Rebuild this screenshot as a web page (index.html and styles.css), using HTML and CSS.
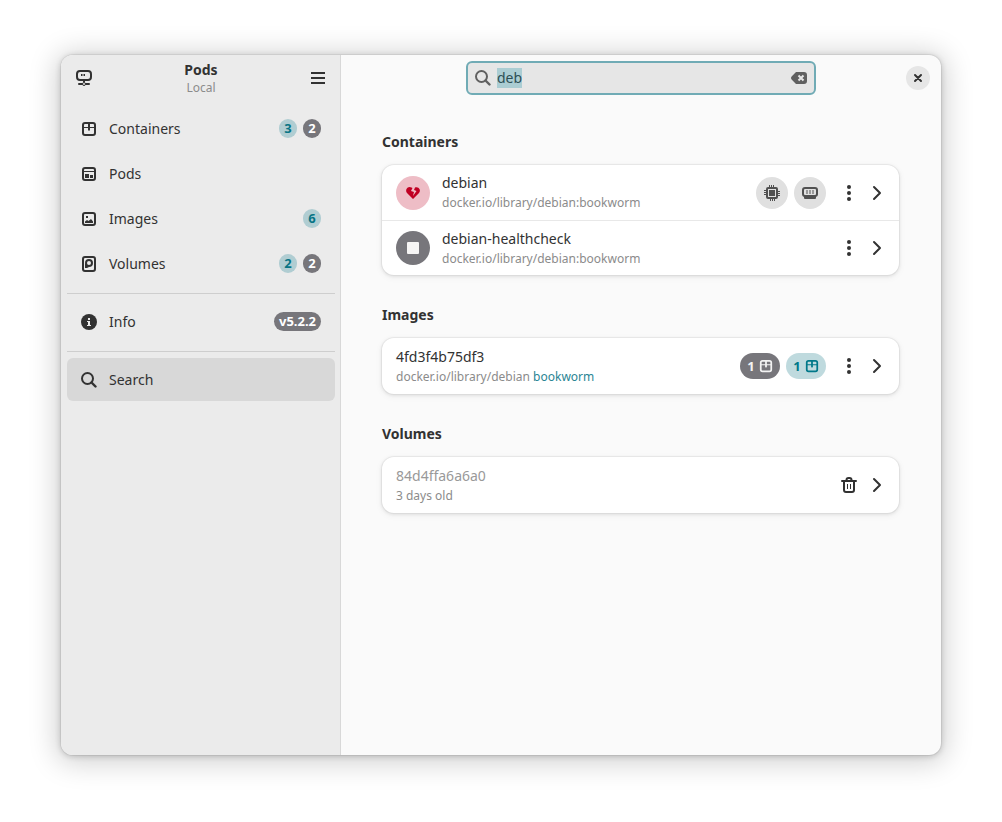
FILE: index.html
```html
<!DOCTYPE html>
<html lang="en">
<head>
<meta charset="utf-8">
<title>Pods</title>
<link rel="stylesheet" href="styles.css">
</head>
<body>
<svg class="defs" aria-hidden="true">
  <symbol id="container" viewBox="0 0 16 16"><rect x="2" y="2" width="12" height="12" rx="2" fill="none" stroke="currentColor" stroke-width="2"/><path d="M2 6h12v1H2zM7 2h2v7l-1 1-1-1z" fill="currentColor"/></symbol>
  <symbol id="dots" viewBox="0 0 16 16"><g fill="currentColor"><circle cx="8" cy="2" r="2"/><circle cx="8" cy="8" r="2"/><circle cx="8" cy="14" r="2"/></g></symbol>
  <symbol id="chevron" viewBox="0 0 16 16"><path d="M5 2l6 6-6 6" fill="none" stroke="currentColor" stroke-width="2" stroke-linecap="round" stroke-linejoin="round"/></symbol>
  <symbol id="search" viewBox="0 0 16 16"><circle cx="6.500" cy="6.500" r="5.500" fill="none" stroke="currentColor" stroke-width="2"/><path d="M10.500 10.500l4 4" stroke="currentColor" stroke-width="2.400" stroke-linecap="round"/></symbol>
</svg>

<div class="window">
  <aside class="sidebar">
    <header class="sidebar-header">
      <button class="flat" aria-label="Connections"><svg class="icon" viewBox="0 0 16 16"><rect x="1" y="1" width="14" height="9" rx="3" fill="none" stroke="currentColor" stroke-width="2"/><path d="M5 4h1.500v2H5zM7.500 4H9v2H7.500zM7 10h2v2H7zM3 13h10a1 1 0 0 1 0 2H3a1 1 0 0 1 0-2z" fill="currentColor"/><circle cx="8" cy="14" r="1.500" fill="#ebebeb" stroke="currentColor"/></svg></button>
      <div class="title"><h1>Pods</h1><p>Local</p></div>
      <button class="flat" aria-label="Main menu"><svg class="icon" viewBox="0 0 16 16"><path d="M1 2h14v2H1zM1 7h14v2H1zM1 12h14v2H1z" fill="currentColor"/></svg></button>
    </header>
    <nav class="nav">
      <a class="item" href="#containers"><svg class="icon"><use href="#container"/></svg><span class="label">Containers</span><span class="count teal">3</span><span class="count">2</span></a>
      <a class="item" href="#pods"><svg class="icon" viewBox="0 0 16 16"><rect x="2" y="2" width="12" height="12" rx="2" fill="none" stroke="currentColor" stroke-width="2"/><path d="M2 5h12v1H2zM4 8h4v4H4zM9 9h3v3H9z" fill="currentColor"/></svg><span class="label">Pods</span></a>
      <a class="item" href="#images"><svg class="icon" viewBox="0 0 16 16"><rect x="2" y="2" width="12" height="12" rx="2" fill="none" stroke="currentColor" stroke-width="2"/><path d="M5 5h2v2H5zM4 12v-1.500L6 9l1.500 1L10 8l2 2.500V12z" fill="currentColor"/></svg><span class="label">Images</span><span class="count teal">6</span></a>
      <a class="item" href="#volumes"><svg class="icon" viewBox="0 0 16 16"><rect x="2" y="1" width="12" height="14" rx="2" fill="none" stroke="currentColor" stroke-width="2"/><circle cx="8" cy="7" r="3" fill="none" stroke="currentColor" stroke-width="2"/><path d="M4 7l2 2.500L8 11l-2 1H4z" fill="currentColor"/></svg><span class="label">Volumes</span><span class="count teal">2</span><span class="count">2</span></a>
      <hr>
      <a class="item" href="#info"><svg class="icon" viewBox="0 0 16 16"><circle cx="8" cy="8" r="8" fill="currentColor"/><path d="M7 4h2v2H7zM6 7h3v4h1v1H6v-1h1V8H6z" fill="#ebebeb"/></svg><span class="label">Info</span><span class="count">v5.2.2</span></a>
      <hr>
      <a class="item selected" href="#search-page" aria-current="page"><svg class="icon"><use href="#search"/></svg><span class="label">Search</span></a>
    </nav>
  </aside>

  <main class="content">
    <header class="content-header">
      <label class="entry">
        <svg class="icon"><use href="#search"/></svg>
        <input type="text" id="query" value="deb" aria-label="Search" autofocus>
        <button class="flat" aria-label="Clear"><svg class="icon" viewBox="0 0 16 16"><path d="M5 2h8a3 3 0 0 1 3 3v6a3 3 0 0 1-3 3H5L.600 9.400a2 2 0 0 1 0-2.800z" fill="currentColor"/><path d="M7.500 5.500l5 5M12.500 5.500l-5 5" stroke="#e6e6e6" stroke-width="2"/></svg></button>
      </label>
      <button class="close" aria-label="Close"><svg class="icon" viewBox="0 0 16 16"><path d="M5 5l6 6M11 5l-6 6" stroke="currentColor" stroke-width="2" stroke-linecap="round"/></svg></button>
    </header>

    <div class="results">
      <section>
        <h2>Containers</h2>
        <div class="card">
          <div class="row">
            <span class="status bad"><svg class="icon" viewBox="0 0 16 16"><path d="M8 14L2 8C-.500 4.500 3 .500 6.500 2.500L7.500 3 6 6l3 1-1 4 3.500-5-2.500-1 1-2.500C13.500 1 16.500 5 14 8z" fill="currentColor"/></svg></span>
            <div class="text"><h3>debian</h3><p>docker.io/library/debian:bookworm</p></div>
            <div class="meters">
              <span class="meter"><svg class="icon" viewBox="0 0 16 16"><rect x="3" y="3" width="10" height="10" rx="1" fill="none" stroke="currentColor" stroke-width="2"/><path d="M5 5h6v6H5zM5 0h1v2H5zM7 0h1v2H7zM9 0h1v2H9zM6 14h1v2H6zM8 14h1v2H8zM10 14h1v2h-1zM0 5h2v1H0zM0 7h2v1H0zM0 9h2v1H0zM14 6h2v1h-2zM14 8h2v1h-2zM14 10h2v1h-2z" fill="currentColor"/><rect x="4.500" y="4.500" width="7" height="7" fill="none" stroke="#e0e0e0"/></svg></span>
              <span class="meter"><svg class="icon" viewBox="0 0 16 16"><rect x="1" y="3" width="14" height="8" rx="2" fill="none" stroke="currentColor" stroke-width="2"/><path d="M2 11h12v2a1 1 0 0 1-1 1H3a1 1 0 0 1-1-1z" fill="currentColor"/><path d="M4 5h2v4H4zM7 5h2v4H7zM10 5h2v4h-2z" fill="#999"/></svg></span>
            </div>
            <div class="actions"><button class="flat" aria-label="Menu"><svg class="icon"><use href="#dots"/></svg></button><a href="#debian" aria-label="Open debian"><svg class="icon"><use href="#chevron"/></svg></a></div>
          </div>
          <div class="row">
            <span class="status"><svg class="icon" viewBox="0 0 16 16"><rect x="2" y="2" width="12" height="12" rx="1" fill="currentColor"/></svg></span>
            <div class="text"><h3>debian-healthcheck</h3><p>docker.io/library/debian:bookworm</p></div>
            <div class="actions"><button class="flat" aria-label="Menu"><svg class="icon"><use href="#dots"/></svg></button><a href="#debian-healthcheck" aria-label="Open debian-healthcheck"><svg class="icon"><use href="#chevron"/></svg></a></div>
          </div>
        </div>
      </section>

      <section>
        <h2>Images</h2>
        <div class="card">
          <div class="row">
            <div class="text"><h3>4fd3f4b75df3</h3><p>docker.io/library/debian <span class="tag">bookworm</span></p></div>
            <div class="meters">
              <span class="pill">1<svg><use href="#container"/></svg></span>
              <span class="pill teal">1<svg><use href="#container"/></svg></span>
            </div>
            <div class="actions"><button class="flat" aria-label="Menu"><svg class="icon"><use href="#dots"/></svg></button><a href="#4fd3f4b75df3" aria-label="Open image"><svg class="icon"><use href="#chevron"/></svg></a></div>
          </div>
        </div>
      </section>

      <section>
        <h2>Volumes</h2>
        <div class="card">
          <div class="row">
            <div class="text"><h3 class="dim">84d4ffa6a6a0</h3><p>3 days old</p></div>
            <div class="actions"><button class="flat" aria-label="Delete"><svg class="icon" viewBox="0 0 16 16"><path d="M1 4h14M3 4v9a2 2 0 0 0 2 2h6a2 2 0 0 0 2-2V4M5.500 3.500V3a2 2 0 0 1 2-2h1a2 2 0 0 1 2 2v.500" fill="none" stroke="currentColor" stroke-width="2" stroke-linecap="round"/><path d="M6 7h1v5H6zM9 7h1v5H9z" fill="currentColor"/></svg></button><a href="#84d4ffa6a6a0" aria-label="Open volume"><svg class="icon"><use href="#chevron"/></svg></a></div>
          </div>
        </div>
      </section>
    </div>
  </main>
</div>
<script src="app.js"></script>
</body>
</html>
```
FILE: styles.css
```css
* { box-sizing: border-box; }

body {
  margin: 0;
  min-height: 100vh;
  padding: 55px 61px 67px;
  display: flex;
  background: #fff;
  color: #323232;
  font: 14px/20px "Noto Sans", sans-serif;
}

h1, h2, h3, p { margin: 0; font-size: 14px; line-height: 20px; }
h3, p { font-weight: 400; }
a { color: inherit; text-decoration: none; }
button { font: inherit; color: inherit; border: 0; padding: 0; cursor: pointer; }

.defs { position: absolute; width: 0; height: 0; }
.icon { display: block; width: 16px; height: 16px; flex: none; overflow: visible; }
.flat { background: none; }

.window {
  flex: 1;
  display: flex;
  border-radius: 12px;
  overflow: hidden;
  background: #fafafa;
  box-shadow: 0 0 0 1px rgba(0, 0, 0, 0.05), 0 1px 6px rgba(0, 0, 0, 0.2), 0 3px 28px 5px rgba(0, 0, 0, 0.18);
}

.sidebar {
  flex: none;
  width: 280px;
  background: #ebebeb;
  border-right: 1px solid #d8d8d8;
}

.sidebar-header {
  display: flex;
  align-items: center;
  justify-content: space-between;
  height: 46px;
  padding: 0 14px 0 15px;
}

.title { text-align: center; }
.title h1 { line-height: 19px; }
.title p { font-size: 12px; line-height: 17px; color: #8b8b8b; }

.nav { display: flex; flex-direction: column; gap: 2px; padding: 6px 5px 6px 6px; }

.nav hr {
  width: 100%;
  height: 1px;
  margin: 6px 0 4px;
  border: 0;
  background: #cecece;
}

.item {
  display: flex;
  align-items: center;
  gap: 6px;
  height: 43px;
  padding: 0 14px;
  border-radius: 6px;
}

.selected { background: #d8d8d8; }
.label { flex: 1; margin-left: 6px; }

.count {
  min-width: 18px;
  padding: 0 5px;
  border-radius: 10px;
  background: #77767b;
  color: #fff;
  font-size: 13px;
  font-weight: 700;
  line-height: 19px;
  text-align: center;
}

.count.teal { background: #b0cdd2; color: #087485; }

.content { flex: 1; min-width: 0; }

.content-header {
  display: grid;
  grid-template-columns: 1fr minmax(0, 350px) 1fr;
  align-items: center;
  height: 46px;
  padding: 0 11px;
}

.entry {
  grid-column: 2;
  display: flex;
  align-items: center;
  gap: 6px;
  height: 34px;
  padding: 0 7px;
  border: 2px solid #70abb5;
  border-radius: 6px;
  background: #e6e6e6;
  color: #606060;
}

.entry input {
  flex: 1;
  min-width: 0;
  height: 20px;
  padding: 0;
  border: 0;
  outline: 0;
  background: none;
  color: #323232;
  font: inherit;
}

.entry input::selection { background: rgba(112, 180, 192, 0.5); color: #2d4f55; }

.close {
  justify-self: end;
  display: grid;
  place-items: center;
  width: 24px;
  height: 24px;
  border-radius: 50%;
  background: #e6e6e6;
}

.results {
  display: flex;
  flex-direction: column;
  gap: 30px;
  max-width: 566px;
  margin: 0 auto;
  padding: 31px 25px 24px 24px;
}

.results h2 { margin-bottom: 13px; }

.card {
  border-radius: 12px;
  background: #fff;
  box-shadow: 0 0 0 1px rgba(0, 0, 0, 0.04), 0 1px 3px 1px rgba(0, 0, 0, 0.07), 0 2px 6px 2px rgba(0, 0, 0, 0.03);
}

.row {
  display: flex;
  align-items: center;
  gap: 12px;
  min-height: 55px;
  padding: 6px 14px;
}

.row:only-child { min-height: 56px; }
.row + .row { border-top: 1px solid #e8e8e8; }
.text { flex: 1; min-width: 0; }
.text h3 { line-height: 21px; }
.text p { font-size: 12px; color: #8b8b8b; }
.text .tag { color: #2a8594; }
.text .dim { color: #999; }

.status {
  display: grid;
  place-items: center;
  width: 34px;
  height: 34px;
  border-radius: 50%;
  background: #77767b;
  color: #f6f5f4;
}

.status.bad { background: #eebdc6; color: #c00023; }

.meters { display: flex; gap: 6px; margin-right: 3px; }

.meter {
  display: grid;
  place-items: center;
  width: 32px;
  height: 32px;
  border-radius: 50%;
  background: #e0e0e0;
  color: #505050;
}

.pill {
  display: flex;
  align-items: center;
  justify-content: center;
  gap: 4px;
  min-width: 40px;
  height: 26px;
  padding: 0 7px;
  border-radius: 13px;
  background: #77767b;
  color: #f3f3f3;
  font-size: 13px;
  font-weight: 700;
}

.pill svg { width: 14px; height: 14px; }
.pill.teal { background: #bfdade; color: #007889; }

.actions { display: flex; gap: 12px; }
```
FILE: app.js
```js
const query = document.getElementById("query");
query.focus();
query.select();
```
